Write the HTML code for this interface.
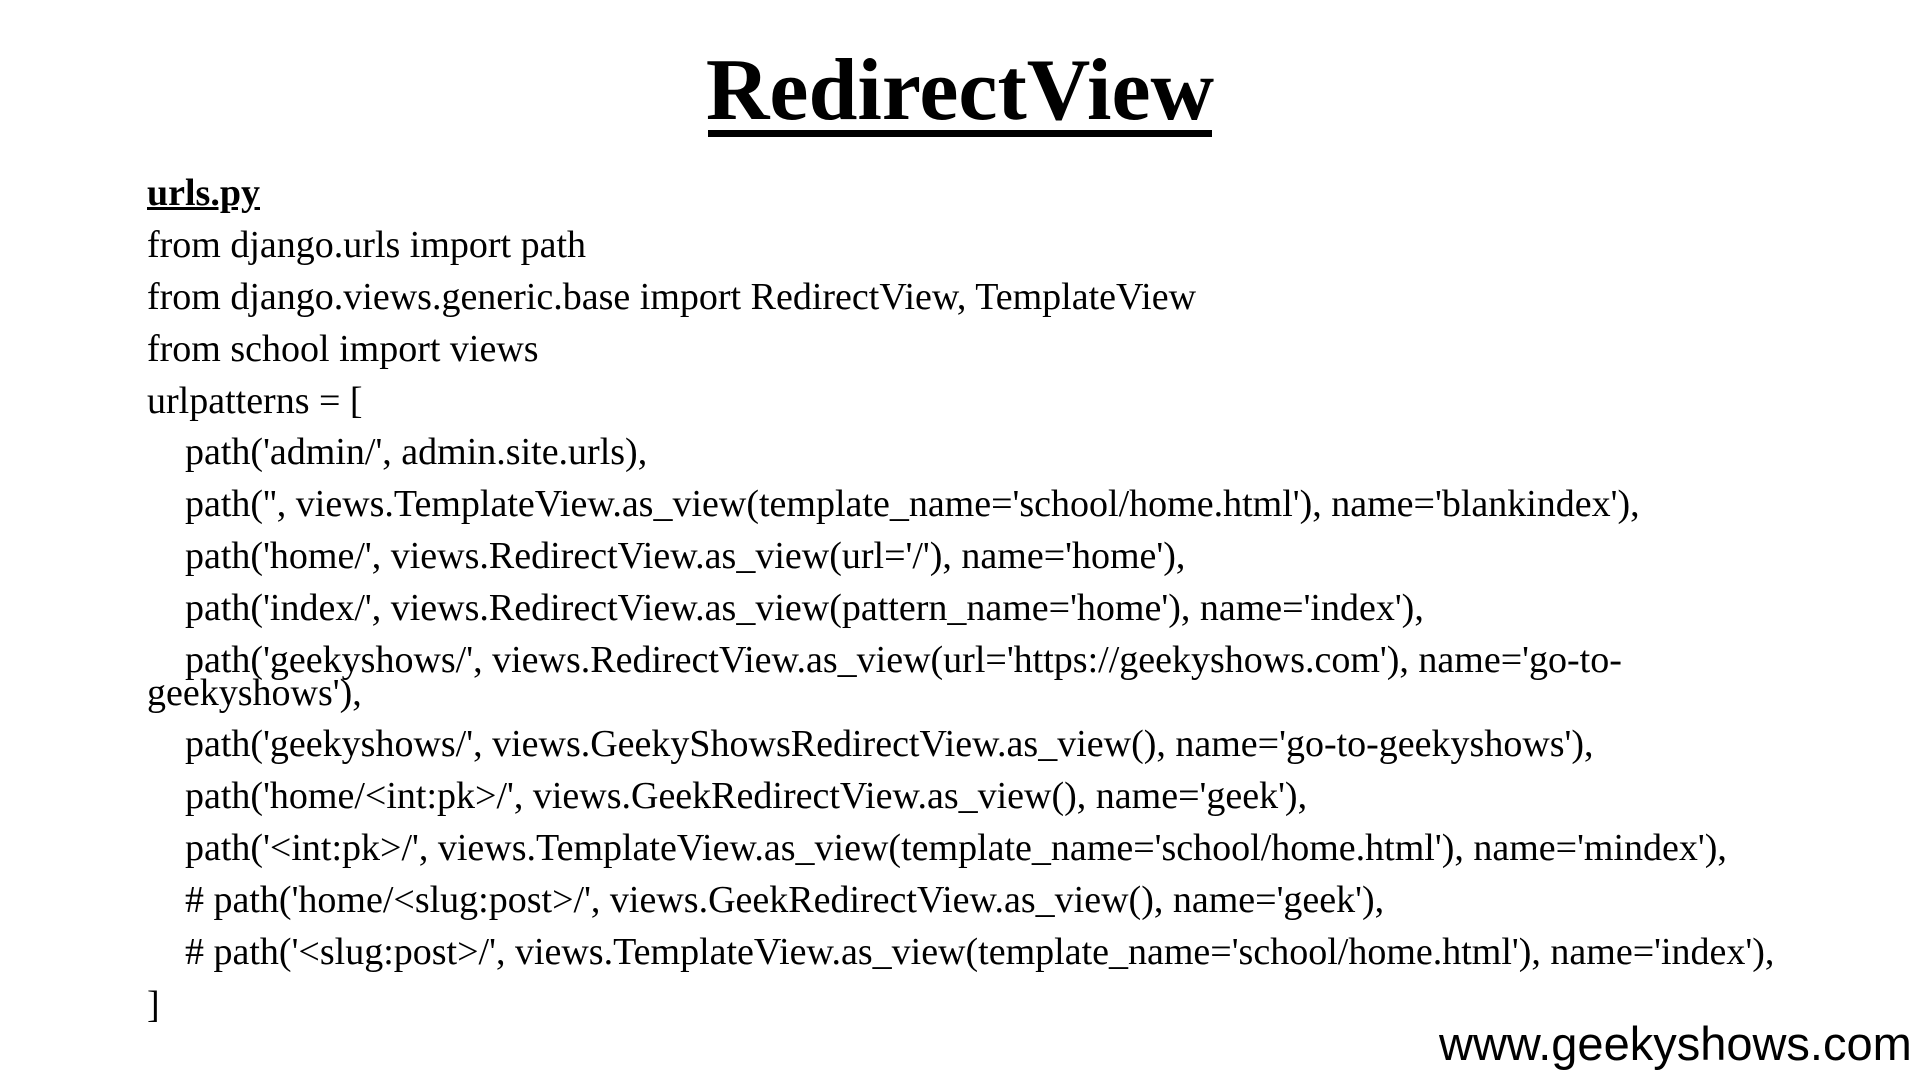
<!DOCTYPE html>
<html><head><meta charset="utf-8"><style>
html,body{margin:0;padding:0;background:#fff;width:1920px;height:1080px;overflow:hidden;position:relative}
.l{position:absolute;font-family:"Liberation Serif",serif;font-size:38px;line-height:38px;color:#000;white-space:pre;}
.t{position:absolute;left:0;width:1920px;text-align:center;top:47px;font-family:"Liberation Serif",serif;font-weight:bold;font-size:88px;line-height:88px;}
.u{position:absolute;left:708px;width:504px;top:130px;height:7px;background:#000}
.w{position:absolute;left:1439px;top:1020px;font-family:"Liberation Sans",sans-serif;font-size:47px;line-height:47px;white-space:pre}
</style></head><body>
<div class="t">RedirectView</div>
<div class="u"></div>
<div class="l" style="left:147px;top:174px;font-weight:bold;text-decoration:underline">urls.py</div>
<div class="l" style="left:147px;top:226px">from django.urls import path</div>
<div class="l" style="left:147px;top:278px">from django.views.generic.base import RedirectView, TemplateView</div>
<div class="l" style="left:147px;top:330px">from school import views</div>
<div class="l" style="left:147px;top:382px">urlpatterns = [</div>
<div class="l" style="left:185px;top:433px">path('admin/', admin.site.urls),</div>
<div class="l" style="left:185px;top:485px">path('', views.TemplateView.as_view(template_name='school/home.html'), name='blankindex'),</div>
<div class="l" style="left:185px;top:537px">path('home/', views.RedirectView.as_view(url='/'), name='home'),</div>
<div class="l" style="left:185px;top:589px">path('index/', views.RedirectView.as_view(pattern_name='home'), name='index'),</div>
<div class="l" style="left:185px;top:641px">path('geekyshows/', views.RedirectView.as_view(url='https://geekyshows.com'), name='go-to-</div>
<div class="l" style="left:147px;top:674px">geekyshows'),</div>
<div class="l" style="left:185px;top:725px">path('geekyshows/', views.GeekyShowsRedirectView.as_view(), name='go-to-geekyshows'),</div>
<div class="l" style="left:185px;top:777px">path('home/&lt;int:pk&gt;/', views.GeekRedirectView.as_view(), name='geek'),</div>
<div class="l" style="left:185px;top:829px">path('&lt;int:pk&gt;/', views.TemplateView.as_view(template_name='school/home.html'), name='mindex'),</div>
<div class="l" style="left:185px;top:881px"># path('home/&lt;slug:post&gt;/', views.GeekRedirectView.as_view(), name='geek'),</div>
<div class="l" style="left:185px;top:933px"># path('&lt;slug:post&gt;/', views.TemplateView.as_view(template_name='school/home.html'), name='index'),</div>
<div class="l" style="left:147px;top:986px">]</div>
<div class="w">www.geekyshows.com</div>
</body></html>
